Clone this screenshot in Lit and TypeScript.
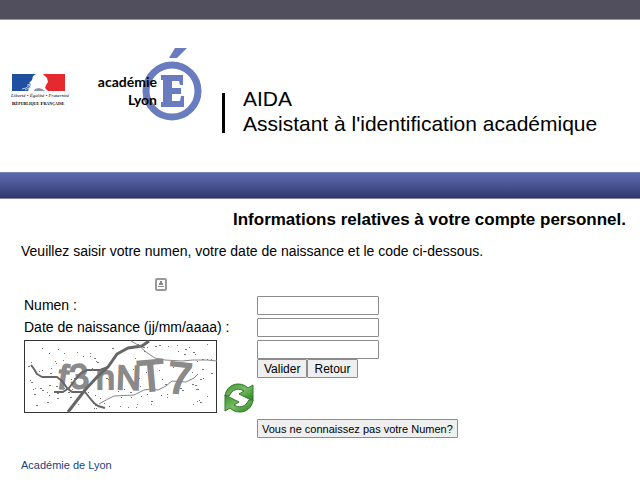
import { LitElement, html, css } from "lit";
import { customElement } from "lit/decorators.js";

// Repeatable scatter of specks for the captcha background.
function specks(count: number) {
  let seed = 71;
  const next = () => (seed = (seed * 16807) % 2147483647) / 2147483647;
  let d = "";
  for (let i = 0; i < count; i++) {
    const x = 4 + Math.floor(next() * 184);
    const y = 4 + Math.floor(next() * 65);
    const w = next() > 0.6 ? 2 : 1;
    d += `M${x} ${y}h${w}v1h-${w}z`;
  }
  return d;
}

@customElement("aida-captcha")
class AidaCaptcha extends LitElement {
  static styles = css`
    :host { display: block; }
    svg { display: block; }
    text { font-family: "Liberation Sans", Arial, sans-serif; font-weight: normal; fill: #8a8a8a; stroke: #8a8a8a; stroke-width: 2; }
    .mid { font-size: 34px; }
    .large { font-size: 44px; }
  `;
  render() {
    return html`<svg width="193" height="73" viewBox="0 0 193 73" role="img" aria-label="Code de sécurité">
      <rect x="0.5" y="0.5" width="192" height="72" fill="#fff" stroke="#333" />
      <path d=${specks(150)} fill="#777" />
      <text class="mid" x="33" y="48" transform="rotate(8 33 48)">f</text>
      <text class="mid" x="47" y="49" transform="rotate(-6 47 49)" stroke-width="4">3</text>
      <text class="mid" x="72" y="49">n</text>
      <text class="mid" x="92" y="49" transform="rotate(2 92 49)">N</text>
      <text class="large" x="115" y="52" transform="rotate(-5 115 52)">T</text>
      <text class="large" x="142" y="52" transform="rotate(6 142 52)">7</text>
      <g fill="none" stroke="#666" stroke-linejoin="round">
        <path stroke-width="2" d="M7 25l3 4 3 5 5 3h15l5 4 5 7 5 4h13l4 5 5 6 4 3 7 2" />
        <path stroke-width="2" d="M30 52h9l6-4 6-8 6-7 6-3h13l8-3" />
        <path stroke-width="3" d="M44 72l17-22 13-14 10-9 9-13 11-6 14-2 7-5" />
        <path stroke-width="1" stroke="#888" d="M107 1l7 4 8 7 9 6 10 2 17 1 11-1h14l10 1" />
        <path stroke-width="1" stroke="#888" d="M75 64l9-5 6-3 20-1 10-5 8-1 6 1 8-4 6-5 14 1 8-4 4-4" />
      </g>
    </svg>`;
  }
}

@customElement("app-root")
class AppRoot extends LitElement {
  static styles = css`
    :host { display: block; font-family: "Liberation Sans", Arial, sans-serif; color: #000; background: #fff; }
    .top { height: 19px; background: #514f5d; border-bottom: 1px solid #9b99a5; }
    header { display: flex; align-items: flex-start; padding: 27px 11px 0; min-height: 125px; }
    svg { display: block; overflow: visible; }
    .marianne { margin-top: 26px; }
    .academie { margin-left: 34px; }
    .brand { font-family: Lato, "Liberation Sans", sans-serif; font-weight: bold; font-size: 14px; text-anchor: end; }
    .motto { font-family: "Liberation Serif", serif; font-style: italic; font-size: 5px; }
    .rep { font-family: "Liberation Serif", serif; font-weight: bold; font-size: 5px; font-variant: small-caps; }
    .title { display: flex; gap: 18px; margin: 39px 0 0 20px; }
    .rule { width: 3px; height: 40px; margin-top: 7px; background: #000; }
    h1 { margin: 0; font-weight: normal; font-size: 21px; line-height: 25px; white-space: nowrap; }
    .band {
      height: 25px; border-top: 1px solid #7b85bb; border-bottom: 1px solid #8086ad;
      background: linear-gradient(#5c69ad, #505b9c 35%, #3d4581 75%, #333b70 94%, #2a3060);
    }
    main { padding: 11px 14px 0 21px; }
    h2 { margin: 0; text-align: right; font-size: 17px; line-height: 20px; white-space: nowrap; }
    p { margin: 12px 0 0; font-size: 14px; line-height: 18px; }
    .doc { margin: 18px 0 0 134px; }
    form { display: grid; grid-template-columns: 233px 1fr; row-gap: 3px; margin: 5px 0 0 3px; }
    label { font-size: 14px; line-height: 19px; }
    input { box-sizing: border-box; width: 122px; height: 19px; margin: 0; padding: 1px 2px; border: 1px solid #8c8c8c; border-radius: 1px; background: #fff; display: block; }
    .code { display: flex; align-items: flex-end; gap: 7px; }
    .refresh { padding: 0; border: 0; background: none; }
    .actions { display: flex; }
    .btn { box-sizing: border-box; height: 19px; margin: 0; padding: 0 6px; border: 1px solid #8c8c8c; border-radius: 1px; background: #efefef; color: #000; font: 12px/16px "Liberation Sans", Arial, sans-serif; white-space: nowrap; }
    .wide { font-size: 11px; padding: 0 4px; display: block; }
    .help { grid-column: 2; margin-top: 3px; }
    footer { padding: 19px 21px 18px; font-size: 11px; line-height: 16px; }
    a { color: #1b3f7f; text-decoration: none; }
  `;
  render() {
    return html`
      <div class="top"></div>
      <header>
        <svg class="marianne" width="55" height="34" viewBox="0 0 55 34" role="img" aria-label="République Française">
          <path fill="#1f4f9e" d="M1 1h24l-3 2-1 4-3 3 2 1-2 4-1 3H1z" />
          <path fill="#e52a2f" d="M32 1h22v17H37l-3-3 1-3 2-3-1-4z" />
          <path fill="none" stroke="#b9cde8" d="M11 16l4-1 4-3M14 17l6-3M16 12l4-1" />
          <path fill="#8a94a4" d="M24 16l4-1 3 1 3 2H23z" />
          <text class="motto" x="0" y="24">Liberté • Égalité • Fraternité</text>
          <text class="rep" x="1" y="32">République Française</text>
        </svg>
        <svg class="academie" width="102" height="74" viewBox="0 0 102 74" role="img" aria-label="académie Lyon">
          <circle cx="72" cy="44" r="26" fill="#fff" stroke="#6a7cc0" stroke-width="7" />
          <path fill="#6a7cc0" d="M75 1h12L77 11h-8z" />
          <path fill="#6a7cc0" d="M61 28h22v10h-3l-1-4h-7v7h9v6h-9v7h8l1-5h3v11H61v-5h2V33h-2z" />
          <text class="brand" x="57" y="40">académie</text>
          <text class="brand" x="57" y="58">Lyon</text>
        </svg>
        <div class="title"><span class="rule"></span><h1>AIDA<br />Assistant à l'identification académique</h1></div>
      </header>
      <div class="band"></div>
      <main>
        <h2>Informations relatives à votre compte personnel.</h2>
        <p>Veuillez saisir votre numen, votre date de naissance et le code ci-dessous.</p>
        <svg class="doc" width="12" height="13" viewBox="0 0 12 13" aria-hidden="true">
          <rect x="1" y="1" width="10" height="11" rx="1" fill="#fff" stroke="#999" stroke-width="2" />
          <path fill="#888" d="M5 3h2v2h1v2H4V5h1zM3 8h6v1H3z" />
        </svg>
        <form @submit=${(e: Event) => e.preventDefault()}>
          <label for="numen">Numen :</label><input id="numen" type="text" />
          <label for="naissance">Date de naissance (jj/mm/aaaa) :</label><input id="naissance" type="text" />
          <div class="code">
            <aida-captcha></aida-captcha>
            <button class="refresh" type="button" aria-label="Changer le code">
              <svg width="30" height="30" viewBox="0 0 30 30">
                <defs><linearGradient id="g" x2="1" y2="1"><stop stop-color="#3e8f32" /><stop offset=".5" stop-color="#79bd63" /><stop offset="1" stop-color="#287b20" /></linearGradient></defs>
                <g fill="url(#g)" stroke="#2f7a26" stroke-linejoin="round">
                  <path d="M1 13C2 5 8 1 14 1c5 0 8 2 10 4l5-3v16L15 11l5-3c-5-3-10-2-13 2l-2 3z" />
                  <path d="M29 17c-1 8-7 12-13 12-5 0-8-2-10-4l-5 3V12l14 7-5 3c5 3 10 2 13-2l2-3z" />
                </g>
              </svg>
            </button>
          </div>
          <div>
            <input type="text" aria-label="Code" />
            <div class="actions"><button class="btn" type="submit">Valider</button><button class="btn" type="button">Retour</button></div>
          </div>
          <div class="help"><button class="btn wide" type="button">Vous ne connaissez pas votre Numen?</button></div>
        </form>
      </main>
      <footer><a href="#">Académie de Lyon</a></footer>
    `;
  }
}
